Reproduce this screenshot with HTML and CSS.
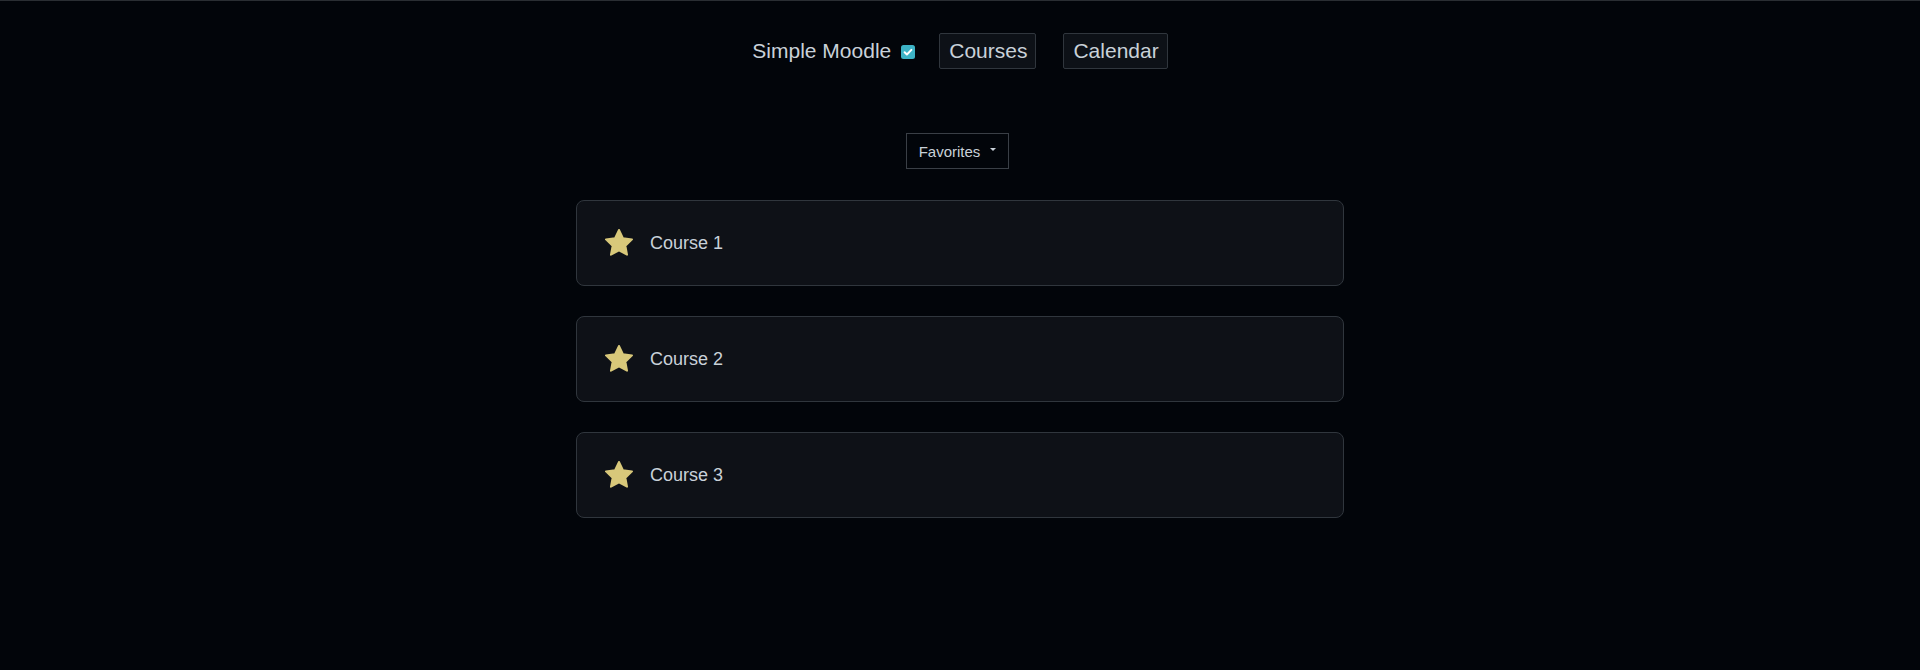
FILE: index.html
```html
<!DOCTYPE html>
<html lang="en">
<head>
<meta charset="utf-8">
<title>Simple Moodle</title>
<link rel="stylesheet" href="styles.css">
</head>
<body>
<header class="topnav">
  <span class="brand">Simple Moodle</span>
  <span class="check" aria-hidden="true">
    <svg width="14" height="14" viewBox="0 0 14 14"><rect x="0" y="0" width="14" height="14" rx="2.5" fill="#3db3c6"/><path d="M3.6 7.2l2.3 2.3 4.5-4.6" fill="none" stroke="#fff" stroke-width="2" stroke-linecap="round" stroke-linejoin="round"/></svg>
  </span>
  <a class="navbtn navbtn-first">Courses</a>
  <a class="navbtn">Calendar</a>
</header>
<main class="content">
  <div class="dropdown">
    <button class="dropbtn">Favorites<span class="caret"></span></button>
  </div>
  <ul class="courses">
    <li class="course"><svg class="star" width="28" height="28" viewBox="1.9 1.9 20.2 20.2"><path d="M12 2.6l2.85 5.95 6.55.85-4.8 4.55 1.2 6.5L12 17.3l-5.8 3.15 1.2-6.5L2.6 9.4l6.55-.85z" fill="#d8c87a" stroke="#d8c87a" stroke-width="1.4" stroke-linejoin="round"/></svg><span class="course-name">Course 1</span></li>
    <li class="course"><svg class="star" width="28" height="28" viewBox="1.9 1.9 20.2 20.2"><path d="M12 2.6l2.85 5.95 6.55.85-4.8 4.55 1.2 6.5L12 17.3l-5.8 3.15 1.2-6.5L2.6 9.4l6.55-.85z" fill="#d8c87a" stroke="#d8c87a" stroke-width="1.4" stroke-linejoin="round"/></svg><span class="course-name">Course 2</span></li>
    <li class="course"><svg class="star" width="28" height="28" viewBox="1.9 1.9 20.2 20.2"><path d="M12 2.6l2.85 5.95 6.55.85-4.8 4.55 1.2 6.5L12 17.3l-5.8 3.15 1.2-6.5L2.6 9.4l6.55-.85z" fill="#d8c87a" stroke="#d8c87a" stroke-width="1.4" stroke-linejoin="round"/></svg><span class="course-name">Course 3</span></li>
  </ul>
</main>
</body>
</html>
```
FILE: styles.css
```css
html, body {
  margin: 0;
  padding: 0;
}
body {
  background: #02050a;
  color: #c9d1d9;
  font-family: "Liberation Sans", Arial, sans-serif;
  border-top: 1px solid #2a2e33;
  min-height: 669px;
}
.topnav {
  display: flex;
  justify-content: center;
  align-items: center;
  padding-top: 32px;
  height: 36px;
  font-size: 21px;
}
.brand {
  color: #c9d1d9;
  line-height: 26px;
}
.check {
  display: inline-flex;
  margin-left: 10px;
  margin-top: 2px;
}
.navbtn {
  display: inline-block;
  box-sizing: border-box;
  height: 36px;
  line-height: 26px;
  padding: 4px 8px 4px 9px;
  border: 1px solid #30363d;
  border-radius: 2px;
  background: #0d1117;
  color: #c9d1d9;
  margin-left: 27px;
}
.navbtn-first {
  margin-left: 24px;
}
.content {
  display: flex;
  flex-direction: column;
  align-items: center;
  padding-top: 64px;
}
.dropdown {
  display: flex;
  justify-content: center;
  margin-right: 5px;
}
.dropbtn {
  display: inline-flex;
  align-items: center;
  box-sizing: border-box;
  height: 36px;
  padding: 0 12px;
  background: transparent;
  border: 1px solid #3a3f46;
  border-radius: 0;
  color: #c9d1d9;
  font-family: "Liberation Sans", Arial, sans-serif;
  font-size: 15px;
}
.caret {
  display: inline-block;
  margin-left: 10px;
  margin-top: -4px;
  width: 0;
  height: 0;
  border-top: 3px solid #c9d1d9;
  border-left: 3px solid transparent;
  border-right: 3px solid transparent;
}
.courses {
  list-style: none;
  margin: 31px 0 0 0;
  padding: 0;
  width: 768px;
  display: flex;
  flex-direction: column;
  gap: 30px;
}
.course {
  box-sizing: border-box;
  height: 86px;
  display: flex;
  align-items: center;
  padding-left: 28px;
  background: #0e1117;
  border: 1px solid #30363d;
  border-radius: 8px;
}
.star {
  display: block;
  flex: none;
}
.course-name {
  margin-left: 17px;
  font-size: 18px;
  color: #c9d1d9;
}
```
